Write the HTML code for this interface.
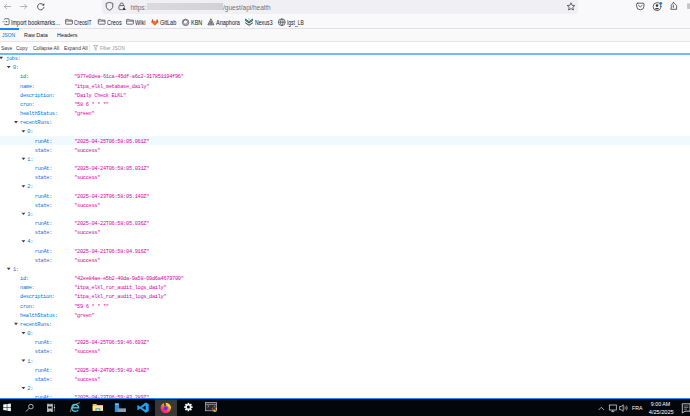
<!DOCTYPE html>
<html><head><meta charset="utf-8">
<style>
*{margin:0;padding:0;box-sizing:border-box}
html,body{width:690px;height:416px;overflow:hidden;background:#fff;font-family:"Liberation Sans",sans-serif}
.abs{position:absolute}
#nav{position:absolute;left:0;top:0;width:690px;height:28px;background:#f9f9fb}
#url{position:absolute;left:102.3px;top:-6px;width:475.6px;height:19.7px;background:#f0f0f4;border-radius:3px}
#blur{position:absolute;left:146.8px;top:2.9px;width:75.8px;height:7.5px;background:linear-gradient(90deg,#dadade,#d6d6da 50%,#d2d2d6)}
.ut{position:absolute;top:3.8px;font-size:6.5px;color:#707078;line-height:8px}
.bm{position:absolute;top:18.6px;font-size:6.4px;color:#15141a;line-height:8px;white-space:nowrap;transform:scaleX(0.86);transform-origin:0 0}
#b1{position:absolute;left:0;top:27.6px;width:690px;height:1px;background:#e0e0e6}
#tabs{position:absolute;left:0;top:28.6px;width:690px;height:12.4px;background:#f9f9fa}
#tabsel{position:absolute;left:0;top:28px;width:19.2px;height:1.9px;background:#1a87f5}
#b2{position:absolute;left:0;top:41px;width:690px;height:1.1px;background:#e6e6e9}
.tb{position:absolute;top:31.6px;font-size:5.9px;line-height:7px;color:#15141a;white-space:nowrap;transform:scaleX(0.92);transform-origin:0 0}
.tl{position:absolute;top:45px;font-size:5.8px;line-height:7px;color:#38383d;white-space:nowrap;transform:scaleX(0.86);transform-origin:0 0}
#sep{position:absolute;left:88.8px;top:43px;width:0.6px;height:9px;background:#ececef}
#blue{position:absolute;left:0;top:53px;width:690px;height:1.9px;background:#74b6ff}
.row{position:absolute;left:0;width:690px;height:9.17px;font-family:"Liberation Mono",monospace;font-size:5.3px;letter-spacing:-0.3px;line-height:9.17px;white-space:nowrap}
.row.hl{background:#f0f9fe}
.k{position:absolute;top:1.6px;color:#0074e8}
.v{position:absolute;left:74.2px;top:1.6px;color:#dd00a9}
.tri{position:absolute;top:3.4px;width:0;height:0;border-left:1.6px solid transparent;border-right:1.6px solid transparent;border-top:2.4px solid #6a6a6a}
#task{position:absolute;left:0;top:399px;width:690px;height:17px;background:#03060a}
#taskline{position:absolute;left:0;top:398px;width:690px;height:1px;background:#1f8fff}
.tt{position:absolute;color:#fff;font-size:5.2px;line-height:6px;white-space:nowrap}
</style></head><body>
<div id="nav"></div>
<div id="url"></div>
<!-- nav icons -->
<svg class="abs" style="left:0;top:0" width="100" height="14" viewBox="0 0 100 14">
 <g fill="none" stroke="#a0a0a6" stroke-width="0.8" stroke-linecap="round" stroke-linejoin="round">
  <path d="M10.6 6.5H4.4M6.7 4.2L4.4 6.5 6.7 8.8"/>
  <path d="M20.6 6.5H26.8M24.5 4.2L26.8 6.5 24.5 8.8"/>
 </g>
 <g fill="none" stroke="#3a3a40" stroke-width="0.85" stroke-linecap="round">
  <path d="M43.4 4.9A3.2 3.2 0 1 0 43.9 7.4"/>
 </g>
 <path d="M44.3 3.2V5.6H41.9Z" fill="#3a3a40"/>
</svg>
<div id="blur"></div>
<svg class="abs" style="left:100px;top:0" width="30" height="14" viewBox="0 0 30 14">
 <path d="M9.5 2.4L6.2 3.4V6.2C6.2 8.2 7.6 9.6 9.5 10.2 11.4 9.6 12.8 8.2 12.8 6.2V3.4Z" fill="none" stroke="#3a3a40" stroke-width="0.8" stroke-linejoin="round"/>
 <path d="M20 5.6V4.7A1.7 1.7 0 0 1 23.4 4.7V5.6" fill="none" stroke="#3a3a40" stroke-width="0.75"/>
 <rect x="18.9" y="5.6" width="5.6" height="4" rx="0.7" fill="none" stroke="#3a3a40" stroke-width="0.75"/>
 <path d="M24 6.2L21.3 10.2H26.7Z" fill="#f0f0f4"/>
 <path d="M24 7L22.1 9.9H25.9Z" fill="#3a3a40"/>
</svg>
<div class="ut" style="left:130.5px">https:</div>
<div class="ut" style="left:223px">/guest/api/health</div>
<svg class="abs" style="left:560px;top:0" width="130" height="14" viewBox="0 0 130 14">
 <path d="M11 2.8L12.1 5.3 14.8 5.5 12.8 7.3 13.4 10 11 8.6 8.6 10 9.2 7.3 7.2 5.5 9.9 5.3Z" fill="none" stroke="#3a3a40" stroke-width="0.75" stroke-linejoin="round"/>
 <g fill="none" stroke="#3a3a40" stroke-width="0.8" stroke-linejoin="round" stroke-linecap="round">
  <path d="M77.6 3.2H83A1 1 0 0 1 84 4.2V6.1A3.7 3.7 0 0 1 76.6 6.1V4.2A1 1 0 0 1 77.6 3.2Z"/>
  <path d="M78.5 5.3L80.3 6.9 82.1 5.3"/>
  <circle cx="97" cy="6.6" r="3.9"/>
  <path d="M113.4 2.5L116.6 5.5V9.3H110.9V7.6C111.9 7.6 112.2 6.1 110.9 5.7L113.4 2.5Z"/>
  <path d="M113.4 5.2V7.4"/>
 </g>
 <circle cx="97" cy="5.6" r="1.3" fill="#3a3a40"/>
 <path d="M94.6 9.2C95.3 7.5 98.7 7.5 99.4 9.2Z" fill="#3a3a40"/>
 <circle cx="100.8" cy="3.3" r="1.4" fill="#0a84ff"/>
 <rect x="127.1" y="3.4" width="2.9" height="5.6" fill="#c4c4ca"/>
</svg>
<!-- bookmarks -->
<svg class="abs" style="left:0;top:14px" width="310" height="14" viewBox="0 0 310 14">
 <g fill="none" stroke="#3a3a40" stroke-width="0.7" stroke-linejoin="round">
  <path d="M4.4 5.6V5.4A0.7 0.7 0 0 1 5.1 4.7H8.4A0.7 0.7 0 0 1 9.1 5.4V9.9A0.7 0.7 0 0 1 8.4 10.6H5.1A0.7 0.7 0 0 1 4.4 9.9V9.7"/>
  <path d="M2.3 7.65H5.6" stroke="#8a8a90"/>
  <circle cx="6.5" cy="7.65" r="0.7" fill="#3a3a40" stroke="none"/>
  <path d="M65.6 5.9A0.5 0.5 0 0 1 66.1 5.4H68.1L68.9 6.1H71.9A0.5 0.5 0 0 1 72.4 6.6V9.7A0.5 0.5 0 0 1 71.9 10.2H66.1A0.5 0.5 0 0 1 65.6 9.7Z M65.6 7.1H72.4"/>
  <path d="M98.3 5.9A0.5 0.5 0 0 1 98.8 5.4H100.8L101.6 6.1H104.6A0.5 0.5 0 0 1 105.1 6.6V9.7A0.5 0.5 0 0 1 104.6 10.2H98.8A0.5 0.5 0 0 1 98.3 9.7Z M98.3 7.1H105.1"/>
  <path d="M126.6 5.9A0.5 0.5 0 0 1 127.1 5.4H129.1L129.9 6.1H132.9A0.5 0.5 0 0 1 133.4 6.6V9.7A0.5 0.5 0 0 1 132.9 10.2H127.1A0.5 0.5 0 0 1 126.6 9.7Z M126.6 7.1H133.4"/>
  <circle cx="185.6" cy="8.4" r="3.2"/>
  <path d="M183.6 6.6L185.9 5.9 187.6 7.6 186.9 10.1 184.4 10.3 183.3 8.4Z" stroke-width="0.6"/>
  <circle cx="281.8" cy="8.2" r="3.4"/>
  <path d="M278.4 8.2H285.2M281.8 4.8C280.1 6.6 280.1 9.8 281.8 11.6M281.8 4.8C283.5 6.6 283.5 9.8 281.8 11.6"/>
  <path d="M210.9 4.8L207.9 10.8H213.9Z M210.9 7.2L209.7 9.8H212.1Z" stroke-width="0.75"/>
 </g>
 <path d="M151.2 8L152.6 4.7 153.6 7.3H156.1L157.1 4.7 158.5 8 154.85 11.6Z" fill="#e24329"/>
 <path d="M151.2 8L154.85 11.6 153.6 7.3Z M158.5 8L154.85 11.6 156.1 7.3Z" fill="#fc6d26"/>
 <path d="M153.6 7.3H156.1L154.85 11.6Z" fill="#fca326" opacity="0.6"/>
 <path d="M245.2 4.6L249 7.2 252.8 4.6V6.8L249 9.4 245.2 6.8Z" fill="#3a3a40"/>
 <path d="M246.2 6.3L249 8.1 251.8 6.3" fill="none" stroke="#2fd8a6" stroke-width="0.8"/>
 <path d="M245.2 8.2L249 10.8 252.8 8.2V9.3L249 11.7 245.2 9.3Z" fill="#3a3a40"/>
 <path d="M249 4V6" stroke="#2fd8a6" stroke-width="0.8"/>
</svg>
<div class="bm" style="left:10.5px">Import bookmarks…</div>
<div class="bm" style="left:74.2px;transform:scaleX(0.77)">CreosIT</div>
<div class="bm" style="left:106.5px">Creos</div>
<div class="bm" style="left:135px">Wiki</div>
<div class="bm" style="left:160px">GitLab</div>
<div class="bm" style="left:191px">KBN</div>
<div class="bm" style="left:216px">Anaphora</div>
<div class="bm" style="left:254.6px;transform:scaleX(0.81)">Nexus3</div>
<div class="bm" style="left:287.3px;transform:scaleX(0.77)">Igst_LB</div>
<div id="b1"></div>
<div id="tabs"></div>
<div id="tabsel"></div>
<div id="b2"></div>
<div class="tb" style="left:1.7px;color:#0074e8;transform:scaleX(0.84)">JSON</div>
<div class="tb" style="left:24px">Raw Data</div>
<div class="tb" style="left:57.4px">Headers</div>
<div class="tl" style="left:1px">Save</div>
<div class="tl" style="left:16.2px">Copy</div>
<div class="tl" style="left:32.9px">Collapse All</div>
<div class="tl" style="left:64px">Expand All</div>
<div id="sep"></div>
<svg class="abs" style="left:92px;top:44px" width="8" height="8" viewBox="0 0 8 8">
 <path d="M1.6 1.4H5.6L4.1 3.4V6.2L3.1 5.4V3.4Z" fill="none" stroke="#8a8a90" stroke-width="0.6" stroke-linejoin="round"/>
</svg>
<div class="tl" style="left:100px;color:#949499;transform:scaleX(0.83)">Filter JSON</div>
<div id="blue"></div>
<div class="row" style="top:53.41px"><span class="k" style="left:6px">jobs:</span></div>
<div class="row" style="top:62.59px"><span class="k" style="left:12.9px">0:</span></div>
<div class="row" style="top:71.76px"><span class="k" style="left:20.1px">id:</span><span class="v">"977e0dea-61ca-45df-a6c2-317851194f96"</span></div>
<div class="row" style="top:80.92px"><span class="k" style="left:20.1px">name:</span><span class="v">"itpa_elkl_metabase_daily"</span></div>
<div class="row" style="top:90.10px"><span class="k" style="left:20.1px">description:</span><span class="v">"Daily Check ELKL"</span></div>
<div class="row" style="top:99.27px"><span class="k" style="left:20.1px">cron:</span><span class="v">"58 6 * * *"</span></div>
<div class="row" style="top:108.44px"><span class="k" style="left:20.1px">healthStatus:</span><span class="v">"green"</span></div>
<div class="row" style="top:117.61px"><span class="k" style="left:20.1px">recentRuns:</span></div>
<div class="row" style="top:126.78px"><span class="k" style="left:27.3px">0:</span></div>
<div class="row hl" style="top:135.94px"><span class="k" style="left:34.8px">runAt:</span><span class="v">"2025-04-25T06:58:05.061Z"</span></div>
<div class="row" style="top:145.11px"><span class="k" style="left:34.8px">state:</span><span class="v">"success"</span></div>
<div class="row" style="top:154.28px"><span class="k" style="left:27.3px">1:</span></div>
<div class="row" style="top:163.45px"><span class="k" style="left:34.8px">runAt:</span><span class="v">"2025-04-24T06:58:05.031Z"</span></div>
<div class="row" style="top:172.62px"><span class="k" style="left:34.8px">state:</span><span class="v">"success"</span></div>
<div class="row" style="top:181.79px"><span class="k" style="left:27.3px">2:</span></div>
<div class="row" style="top:190.97px"><span class="k" style="left:34.8px">runAt:</span><span class="v">"2025-04-23T06:58:05.140Z"</span></div>
<div class="row" style="top:200.13px"><span class="k" style="left:34.8px">state:</span><span class="v">"success"</span></div>
<div class="row" style="top:209.30px"><span class="k" style="left:27.3px">3:</span></div>
<div class="row" style="top:218.47px"><span class="k" style="left:34.8px">runAt:</span><span class="v">"2025-04-22T06:58:05.036Z"</span></div>
<div class="row" style="top:227.64px"><span class="k" style="left:34.8px">state:</span><span class="v">"success"</span></div>
<div class="row" style="top:236.81px"><span class="k" style="left:27.3px">4:</span></div>
<div class="row" style="top:245.98px"><span class="k" style="left:34.8px">runAt:</span><span class="v">"2025-04-21T06:58:04.916Z"</span></div>
<div class="row" style="top:255.16px"><span class="k" style="left:34.8px">state:</span><span class="v">"success"</span></div>
<div class="row" style="top:264.32px"><span class="k" style="left:12.9px">1:</span></div>
<div class="row" style="top:273.50px"><span class="k" style="left:20.1px">id:</span><span class="v">"42ee84ae-e5b2-40da-9a58-09d6a4679700"</span></div>
<div class="row" style="top:282.67px"><span class="k" style="left:20.1px">name:</span><span class="v">"itpa_elkl_ror_audit_logs_daily"</span></div>
<div class="row" style="top:291.83px"><span class="k" style="left:20.1px">description:</span><span class="v">"itpa_elkl_ror_audit_logs_daily"</span></div>
<div class="row" style="top:301.01px"><span class="k" style="left:20.1px">cron:</span><span class="v">"59 6 * * *"</span></div>
<div class="row" style="top:310.18px"><span class="k" style="left:20.1px">healthStatus:</span><span class="v">"green"</span></div>
<div class="row" style="top:319.35px"><span class="k" style="left:20.1px">recentRuns:</span></div>
<div class="row" style="top:328.52px"><span class="k" style="left:27.3px">0:</span></div>
<div class="row" style="top:337.69px"><span class="k" style="left:34.8px">runAt:</span><span class="v">"2025-04-25T06:59:46.693Z"</span></div>
<div class="row" style="top:346.86px"><span class="k" style="left:34.8px">state:</span><span class="v">"success"</span></div>
<div class="row" style="top:356.03px"><span class="k" style="left:27.3px">1:</span></div>
<div class="row" style="top:365.19px"><span class="k" style="left:34.8px">runAt:</span><span class="v">"2025-04-24T06:59:49.418Z"</span></div>
<div class="row" style="top:374.37px"><span class="k" style="left:34.8px">state:</span><span class="v">"success"</span></div>
<div class="row" style="top:383.54px"><span class="k" style="left:27.3px">2:</span></div>
<div class="row" style="top:392.71px"><span class="k" style="left:34.8px">runAt:</span><span class="v">"2025-04-23T06:59:43.289Z"</span></div>
<svg class="abs" style="left:0;top:0" width="690" height="416" viewBox="0 0 690 416"><g fill="#38383d"><path d="M-0.80 56.80H3.00L1.10 59.20Z"/><path d="M6.80 65.97H10.60L8.70 68.37Z"/><path d="M14.10 120.99H17.90L16.00 123.39Z"/><path d="M21.55 130.16H25.35L23.45 132.56Z"/><path d="M21.55 157.67H25.35L23.45 160.07Z"/><path d="M21.55 185.18H25.35L23.45 187.58Z"/><path d="M21.55 212.69H25.35L23.45 215.09Z"/><path d="M21.55 240.20H25.35L23.45 242.60Z"/><path d="M6.80 267.71H10.60L8.70 270.11Z"/><path d="M14.10 322.73H17.90L16.00 325.13Z"/><path d="M21.55 331.90H25.35L23.45 334.30Z"/><path d="M21.55 359.41H25.35L23.45 361.81Z"/><path d="M21.55 386.92H25.35L23.45 389.32Z"/></g></svg><div id="taskline"></div>
<div id="task"></div>
<svg class="abs" style="left:0;top:399px" width="690" height="17" viewBox="0 0 690 17">
 <defs>
  <linearGradient id="ffr" x1="0.9" y1="0.1" x2="0.3" y2="1">
   <stop offset="0" stop-color="#ffe04a"/><stop offset="0.35" stop-color="#ff9a1f"/><stop offset="0.7" stop-color="#ff3d5a"/><stop offset="1" stop-color="#e8208f"/>
  </linearGradient>
 </defs>
 <!-- windows logo -->
 <g fill="#f4f4f4">
  <path d="M3.2 5.6L6.8 5.1V8.1H3.2Z"/><path d="M7.3 5.0L10.9 4.5V8.1H7.3Z"/>
  <path d="M3.2 8.6H6.8V11.6L3.2 11.1Z"/><path d="M7.3 8.6H10.9V12.2L7.3 11.7Z"/>
 </g>
 <g fill="none" stroke="#e8e8e8" stroke-width="0.75">
  <circle cx="30.9" cy="7.6" r="2.3"/><path d="M29.2 9.3L25.9 12.6"/>
  <path d="M54.5 5V12.5" stroke="#9a9a9a" stroke-width="0.6"/>
 </g>
 <path d="M47.1 4.7H52.8V12.9H47.1Z M48.2 7.6H51.7V9.6H48.2Z" fill="#bdbdbd" fill-rule="evenodd"/>
 <path d="M48.3 4.7Q49.95 5.8 51.6 4.7Z M48.3 12.9Q49.95 11.8 51.6 12.9Z" fill="#03060a"/>
 <circle cx="54.5" cy="8.3" r="0.6" fill="#fff"/>
 <!-- IE -->
 <path d="M71.9 8.9H78.6C78.6 6.9 77.3 5.5 75.3 5.5 73.3 5.5 71.9 7 71.9 8.9 71.9 10.8 73.3 12.3 75.3 12.3 76.6 12.3 77.6 11.7 78.2 10.8" fill="none" stroke="#3ec3f5" stroke-width="1.4"/>
 <path d="M72.9 8.2H77.6" stroke="#bdf0ff" stroke-width="0.4"/>
 <path d="M70.3 13C70.6 9.5 74 5 80 3.8" fill="none" stroke="#f2b632" stroke-width="0.75"/>
 <!-- explorer -->
 <path d="M92.7 4.9H96.3L97.2 5.9H103V11.8H92.7Z" fill="#f3c746"/>
 <rect x="92.7" y="7" width="10.3" height="4.8" fill="#fde38b"/>
 <rect x="95.5" y="9.3" width="4.8" height="2.5" fill="#2f9ce8"/>
 <rect x="96.5" y="10.2" width="2.8" height="1.6" fill="#fde38b"/>
 <!-- server manager -->
 <rect x="114.8" y="4" width="4.2" height="9" fill="#2f8ddb"/>
 <rect x="115.5" y="5" width="2.8" height="1" fill="#8fc6f2"/>
 <rect x="117.5" y="9.3" width="8.5" height="3.7" fill="#7b96ae"/>
 <path d="M118.5 10.8H125M118.5 12H125" stroke="#b6c8d8" stroke-width="0.5" stroke-dasharray="0.8 0.6"/>
 <!-- vscode -->
 <path d="M145.6 3.6L148.7 5.1V12.3L145.6 13.8 140.1 9.5 137.9 11.2 137.3 10.8V6.5L137.9 6.1 140.1 7.8 Z M145.6 6.4L142 8.65 145.6 10.9Z" fill="#22a2f0" fill-rule="evenodd"/>
 <!-- firefox active -->
 <rect x="155" y="0.6" width="22" height="16.4" fill="#383838"/>
 <circle cx="165.7" cy="9" r="5.2" fill="url(#ffr)"/>
 <path d="M166.2 3.9C169.5 4.6 171.2 7.2 170.9 10 170.2 8.3 169 7.6 168 7.5 168 6 167.3 4.8 166.2 3.9Z" fill="#ffd93d"/>
 <path d="M163.8 3.9L165.6 3.6 165.9 6.8 164.5 7.2Z" fill="#383838"/>
 <circle cx="165.6" cy="9.2" r="2" fill="#5538e6"/>
 <path d="M165.8 7.2C167.3 7.2 168.2 8 168.4 9.2 167.5 8.4 166.6 8.4 165.8 8.7Z" fill="#b020d8"/>
 <!-- gear -->
 <g transform="translate(188.4 8.1)" fill="#f2f2f2">
  <circle r="3"/>
  <g id="teeth"><rect x="-0.85" y="-4.2" width="1.7" height="8.4"/><rect x="-0.85" y="-4.2" width="1.7" height="8.4" transform="rotate(45)"/><rect x="-0.85" y="-4.2" width="1.7" height="8.4" transform="rotate(90)"/><rect x="-0.85" y="-4.2" width="1.7" height="8.4" transform="rotate(135)"/></g>
  <circle r="1.5" fill="#03060a"/>
 </g>
 <!-- app -->
 <rect x="205.6" y="3.4" width="11" height="8.4" fill="#2b2b2b" stroke="#bdbdbd" stroke-width="0.7"/>
 <path d="M205.6 5.4H216.6" stroke="#bdbdbd" stroke-width="0.6"/>
 <path d="M207.5 6.3L209 7.3 207.5 8.3" fill="none" stroke="#d0d0d0" stroke-width="0.5"/>
 <path d="M211.5 9.6L213.2 8 213.2 11.4Z" fill="#e53935"/>
 <path d="M213.5 7.6L215.4 6 215.4 9.2Z" fill="#2f8ddb"/>
 <path d="M212.6 11.8L214.4 10 216.5 12.4 214.4 13.3Z" fill="#8bc34a"/>
 <path d="M215.2 9.6L216.8 8.6 216.8 11Z" fill="#fdd835"/>
 <!-- tray -->
 <g fill="none" stroke="#e8e8e8" stroke-width="0.7">
  <path d="M598.6 11L601.3 8.3 604 11"/>
  <rect x="609.3" y="6" width="7" height="5"/><path d="M611.2 12.6H614.4M612.8 11V12.6"/>
  <path d="M619.6 7.5H621.2L623.2 5.8V12.4L621.2 10.7H619.6Z"/>
  <path d="M624.8 7.6C625.4 8.4 625.4 9.6 624.8 10.4M626.2 6.6C627.4 7.9 627.4 10.1 626.2 11.4"/>
 </g>
 <path d="M682.3 4.8H690V12.2H685L682.3 14Z" fill="none" stroke="#e8e8e8" stroke-width="0.8"/>
 <path d="M683.8 7H688.5M683.8 8.6H688.5M683.8 10.2H687" stroke="#e8e8e8" stroke-width="0.5"/>
</svg>
<div class="tt" style="left:632px;top:405.3px;font-size:5.2px">FRA</div>
<div class="tt" style="left:650.8px;top:401px;font-size:5.3px">9:00 AM</div>
<div class="tt" style="left:648.8px;top:409px;font-size:5.6px">4/25/2025</div>
</body></html>
